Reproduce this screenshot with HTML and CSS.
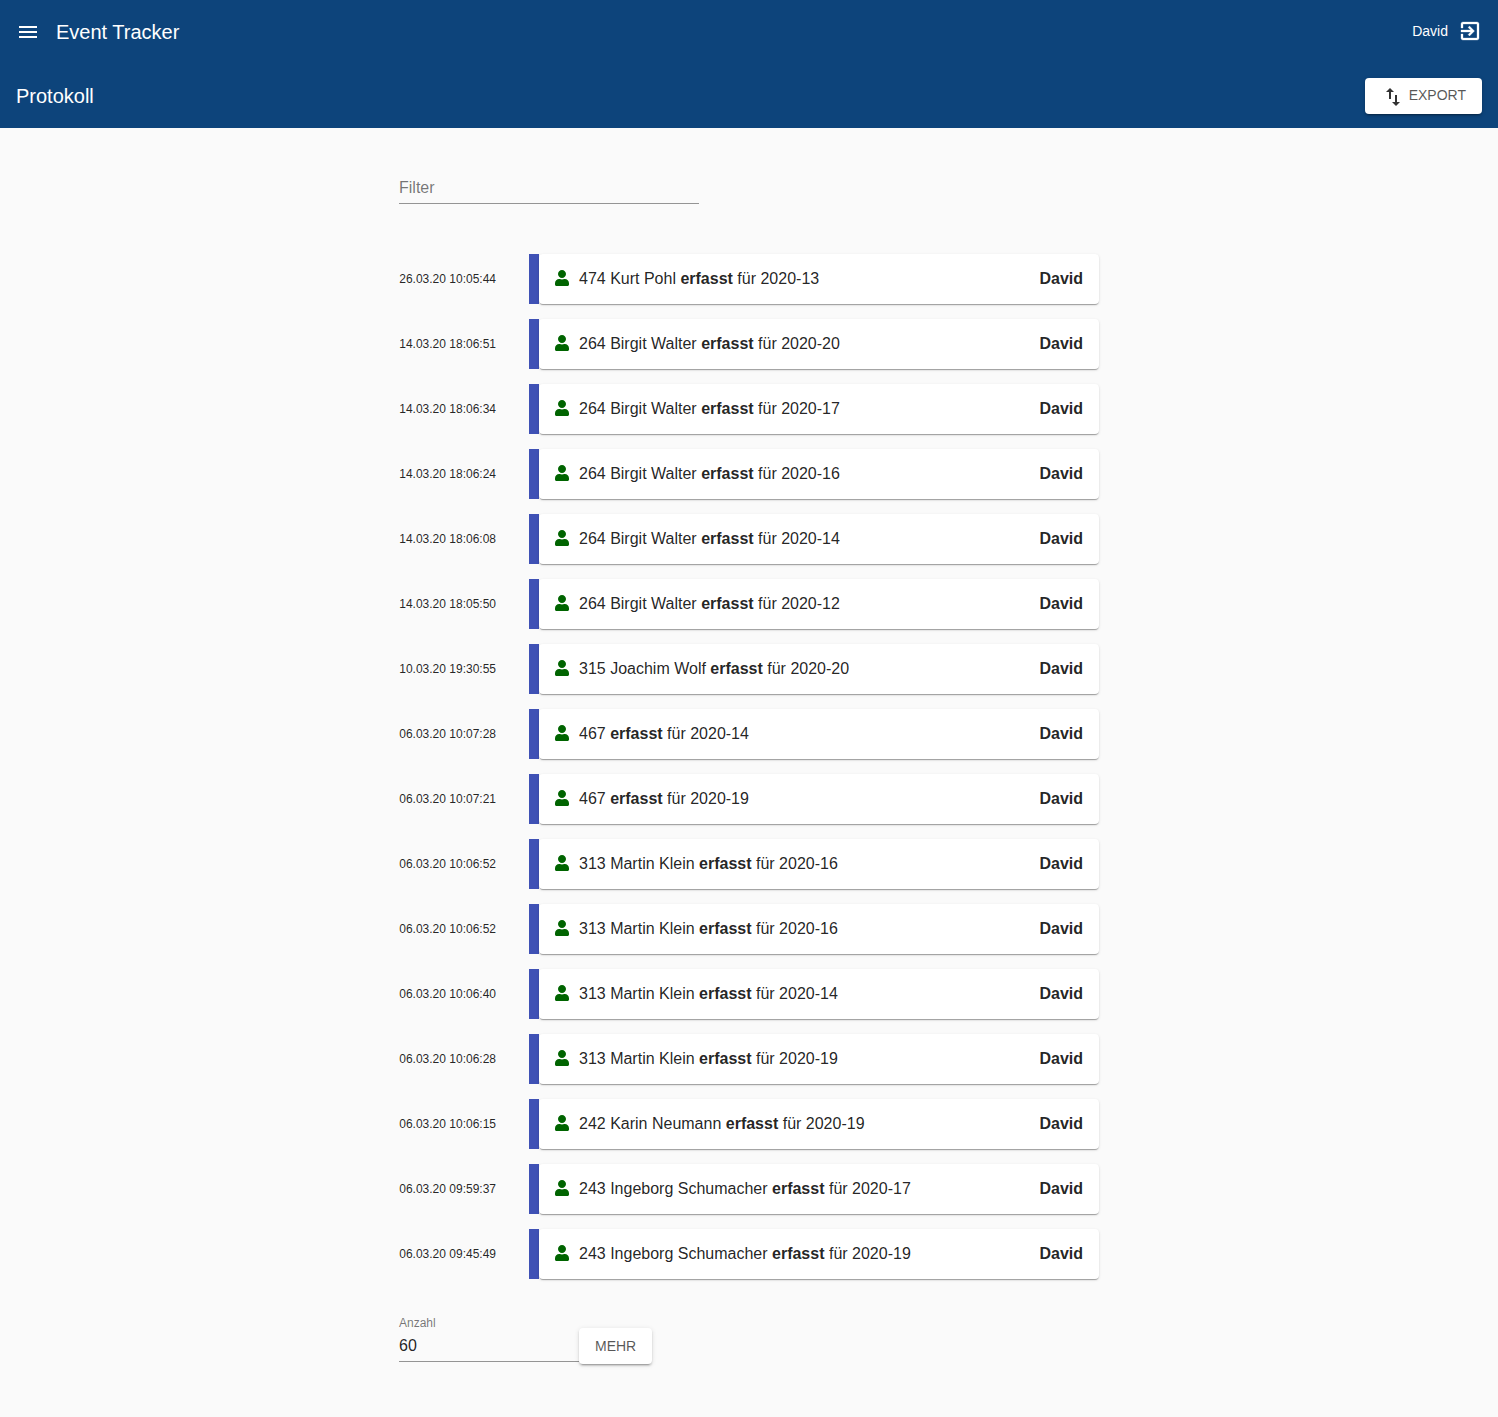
FILE: index.html
```html
<!DOCTYPE html>
<html lang="de">
<head>
<meta charset="utf-8">
<title>Event Tracker</title>
<link rel="stylesheet" href="styles.css">
</head>
<body>
<svg class="defs" width="0" height="0" aria-hidden="true">
  <symbol id="person" viewBox="0 0 448 512"><path d="M224 256c70.7 0 128-57.3 128-128S294.7 0 224 0 96 57.3 96 128s57.3 128 128 128zm89.6 32h-16.7c-22.2 10.2-46.9 16-72.9 16s-50.6-5.8-72.9-16h-16.7C60.2 288 0 348.2 0 422.4V464c0 26.5 21.5 48 48 48h352c26.5 0 48-21.5 48-48v-41.6c0-74.2-60.2-134.4-134.4-134.4z"/></symbol>
</svg>
<header class="appbar">
  <div class="toolbar">
    <svg class="menu-icon" viewBox="0 0 24 24"><path d="M3 18h18v-2H3v2zm0-5h18v-2H3v2zm0-7v2h18V6H3z"/></svg>
    <span class="app-title">Event Tracker</span>
    <span class="user">David</span>
    <svg class="exit-icon" viewBox="0 0 24 24"><path d="M10.09 15.59L11.5 17l5-5-5-5-1.41 1.41L12.67 11H3v2h9.67l-2.58 2.59zM19 3H5c-1.11 0-2 .9-2 2v4h2V5h14v14H5v-4H3v4c0 1.1.89 2 2 2h14c1.1 0 2-.9 2-2V5c0-1.1-.9-2-2-2z"/></svg>
  </div>
  <div class="subbar">
    <span class="page-title">Protokoll</span>
    <button class="btn btn-export" type="button">
      <svg class="swap-icon" viewBox="0 0 24 24"><path d="M16 17.01V10h-2v7.01h-3L15 21l4-3.99h-3zM9 3L5 6.99h3V14h2V6.99h3L9 3z"/></svg>
      <span class="btn-label">EXPORT</span>
    </button>
  </div>
</header>
<main class="content">
  <div class="filter"><span class="filter-label">Filter</span></div>
  <ul class="log">
    <li class="row"><span class="time">26.03.20 10:05:44</span><span class="bar"></span><div class="card"><svg class="person"><use href="#person"/></svg><span class="msg">474 Kurt Pohl <b>erfasst</b> für 2020-13</span><b class="who">David</b></div></li>
    <li class="row"><span class="time">14.03.20 18:06:51</span><span class="bar"></span><div class="card"><svg class="person"><use href="#person"/></svg><span class="msg">264 Birgit Walter <b>erfasst</b> für 2020-20</span><b class="who">David</b></div></li>
    <li class="row"><span class="time">14.03.20 18:06:34</span><span class="bar"></span><div class="card"><svg class="person"><use href="#person"/></svg><span class="msg">264 Birgit Walter <b>erfasst</b> für 2020-17</span><b class="who">David</b></div></li>
    <li class="row"><span class="time">14.03.20 18:06:24</span><span class="bar"></span><div class="card"><svg class="person"><use href="#person"/></svg><span class="msg">264 Birgit Walter <b>erfasst</b> für 2020-16</span><b class="who">David</b></div></li>
    <li class="row"><span class="time">14.03.20 18:06:08</span><span class="bar"></span><div class="card"><svg class="person"><use href="#person"/></svg><span class="msg">264 Birgit Walter <b>erfasst</b> für 2020-14</span><b class="who">David</b></div></li>
    <li class="row"><span class="time">14.03.20 18:05:50</span><span class="bar"></span><div class="card"><svg class="person"><use href="#person"/></svg><span class="msg">264 Birgit Walter <b>erfasst</b> für 2020-12</span><b class="who">David</b></div></li>
    <li class="row"><span class="time">10.03.20 19:30:55</span><span class="bar"></span><div class="card"><svg class="person"><use href="#person"/></svg><span class="msg">315 Joachim Wolf <b>erfasst</b> für 2020-20</span><b class="who">David</b></div></li>
    <li class="row"><span class="time">06.03.20 10:07:28</span><span class="bar"></span><div class="card"><svg class="person"><use href="#person"/></svg><span class="msg">467 <b>erfasst</b> für 2020-14</span><b class="who">David</b></div></li>
    <li class="row"><span class="time">06.03.20 10:07:21</span><span class="bar"></span><div class="card"><svg class="person"><use href="#person"/></svg><span class="msg">467 <b>erfasst</b> für 2020-19</span><b class="who">David</b></div></li>
    <li class="row"><span class="time">06.03.20 10:06:52</span><span class="bar"></span><div class="card"><svg class="person"><use href="#person"/></svg><span class="msg">313 Martin Klein <b>erfasst</b> für 2020-16</span><b class="who">David</b></div></li>
    <li class="row"><span class="time">06.03.20 10:06:52</span><span class="bar"></span><div class="card"><svg class="person"><use href="#person"/></svg><span class="msg">313 Martin Klein <b>erfasst</b> für 2020-16</span><b class="who">David</b></div></li>
    <li class="row"><span class="time">06.03.20 10:06:40</span><span class="bar"></span><div class="card"><svg class="person"><use href="#person"/></svg><span class="msg">313 Martin Klein <b>erfasst</b> für 2020-14</span><b class="who">David</b></div></li>
    <li class="row"><span class="time">06.03.20 10:06:28</span><span class="bar"></span><div class="card"><svg class="person"><use href="#person"/></svg><span class="msg">313 Martin Klein <b>erfasst</b> für 2020-19</span><b class="who">David</b></div></li>
    <li class="row"><span class="time">06.03.20 10:06:15</span><span class="bar"></span><div class="card"><svg class="person"><use href="#person"/></svg><span class="msg">242 Karin Neumann <b>erfasst</b> für 2020-19</span><b class="who">David</b></div></li>
    <li class="row"><span class="time">06.03.20 09:59:37</span><span class="bar"></span><div class="card"><svg class="person"><use href="#person"/></svg><span class="msg">243 Ingeborg Schumacher <b>erfasst</b> für 2020-17</span><b class="who">David</b></div></li>
    <li class="row"><span class="time">06.03.20 09:45:49</span><span class="bar"></span><div class="card"><svg class="person"><use href="#person"/></svg><span class="msg">243 Ingeborg Schumacher <b>erfasst</b> für 2020-19</span><b class="who">David</b></div></li>
  </ul>
  <div class="more">
    <div class="count">
      <span class="count-label">Anzahl</span>
      <span class="count-value">60</span>
    </div>
    <button class="btn btn-more" type="button">MEHR</button>
  </div>
</main>
</body>
</html>
```
FILE: styles.css
```css
* { box-sizing: border-box; }
html, body { margin: 0; padding: 0; }
body {
  background: #fafafa;
  color: rgba(0, 0, 0, 0.87);
  font-family: "Liberation Sans", Arial, sans-serif;
  height: 1417px;
  overflow: hidden;
}
.defs { position: absolute; }

.appbar {
  background: #0d447b;
  color: #fff;
  height: 128px;
  padding: 0 16px;
}
.toolbar {
  display: flex;
  align-items: center;
  height: 64px;
}
.menu-icon { width: 24px; height: 24px; fill: #fff; margin-right: 16px; }
.app-title { font-size: 20px; line-height: 32px; flex: 1; }
.user { font-size: 14px; margin: 0 10px 2px 0; }
.exit-icon { width: 24px; height: 24px; fill: #fff; stroke: #fff; stroke-width: 0.3; margin-bottom: 2px; }
.subbar {
  display: flex;
  align-items: center;
  justify-content: space-between;
  height: 64px;
}
.page-title { font-size: 20px; }

.btn {
  background: #fff;
  border: 0;
  border-radius: 4px;
  color: rgba(0, 0, 0, 0.67);
  font: 400 14px/36px "Liberation Sans", Arial, sans-serif;
  height: 36px;
  padding: 0 16px;
  box-shadow: 0 3px 1px -2px rgba(0,0,0,.2), 0 2px 2px 0 rgba(0,0,0,.14), 0 1px 5px 0 rgba(0,0,0,.12);
}
.btn-export {
  display: flex;
  align-items: center;
}
.btn-label { margin-bottom: 2px; }
.swap-icon { width: 24px; height: 24px; fill: #333; margin: 2px 4px 0 0; }

.content {
  width: 700px;
  margin-left: 399px;
}
.filter {
  width: 300px;
  height: 26px;
  margin-top: 50px;
  border-bottom: 1px solid #949494;
}
.filter-label { font-size: 16px; line-height: 19px; color: rgba(0, 0, 0, 0.54); display: block; }

.log {
  list-style: none;
  margin: 50px 0 0;
  padding: 0;
  display: flex;
  flex-direction: column;
  gap: 15px;
}
.row { display: flex; align-items: stretch; height: 50px; }
.time {
  width: 97px;
  margin-right: 33px;
  font-size: 12px;
  line-height: 50px;
  text-align: right;
  white-space: nowrap;
}
.bar { width: 10px; background: #3f51b5; }
.card {
  flex: 1;
  display: flex;
  align-items: center;
  background: #fff;
  border-radius: 4px;
  padding: 0 16px;
  font-size: 16px;
  box-shadow: 0 2px 1px -1px rgba(0,0,0,.2), 0 1px 1px 0 rgba(0,0,0,.14), 0 1px 3px 0 rgba(0,0,0,.12);
}
.person { width: 14px; height: 16px; fill: #006400; margin: 0 10px 2px 0; flex: none; }
.msg { flex: 1; }
.msg b, .who { font-weight: 700; }

.more {
  display: flex;
  align-items: flex-start;
  margin-top: 33px;
}
.count {
  width: 180px;
  height: 50px;
  border-bottom: 1px solid #949494;
  display: flex;
  flex-direction: column;
  padding-top: 1px;
}
.count-label { font-size: 12px; line-height: 20px; color: rgba(0, 0, 0, 0.54); }
.count-value { font-size: 16px; line-height: 26px; }
.btn-more { width: 73px; margin-top: 16px; }
```
